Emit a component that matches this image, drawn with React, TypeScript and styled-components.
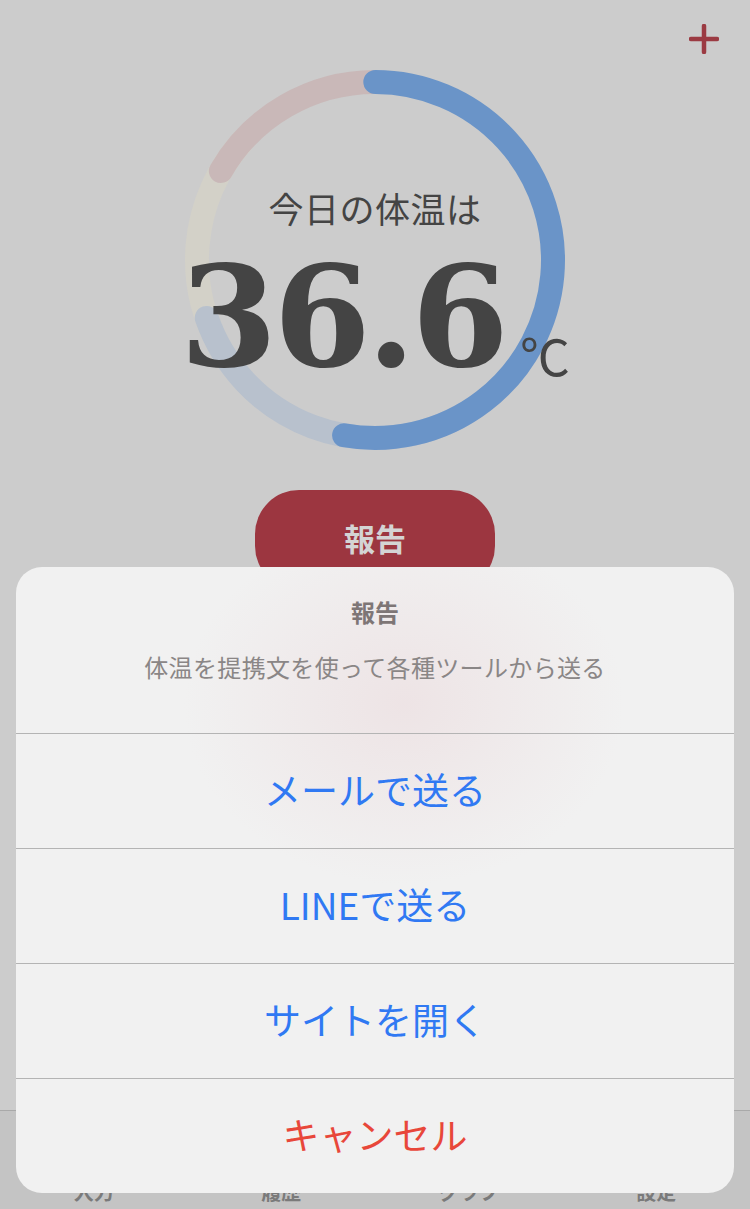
import styled, { createGlobalStyle } from "styled-components";

const GlobalStyle = createGlobalStyle`
  html, body {
    margin: 0;
    padding: 0;
    background: #cccccc;
  }
  body {
    font-family: "Noto Sans CJK JP", "Noto Sans", sans-serif;
  }
`;

const CX = 200;
const CY = 200;
const R = 178;

function point(angle: number) {
  const rad = (angle * Math.PI) / 180;
  return [CX + R * Math.sin(rad), CY - R * Math.cos(rad)];
}

function arc(from: number, to: number) {
  const [x1, y1] = point(from);
  const [x2, y2] = point(to);
  const large = to - from > 180 ? 1 : 0;
  return `M ${x1} ${y1} A ${R} ${R} 0 ${large} 1 ${x2} ${y2}`;
}

const segments = [
  { from: 238, to: 312, color: "#d3d1c8" },
  { from: 150, to: 251, color: "#b8c1cd" },
  { from: 300, to: 359.9, color: "#c9b8b8" },
  { from: 0.1, to: 190, color: "#6a94c8" },
];

const actions = [
  { label: "メールで送る", danger: false },
  { label: "LINEで送る", danger: false },
  { label: "サイトを開く", danger: false },
  { label: "キャンセル", danger: true },
];

const tabs = ["入力", "履歴", "グラフ", "設定"];

export default function App() {
  return (
    <>
      <GlobalStyle />
      <Screen>
        <Header>
          <PlusButton aria-label="追加">
            <svg width="30" height="30" viewBox="0 0 30 30">
              <path
                d="M15 2 V28 M2 15 H28"
                stroke="#9b3a42"
                strokeWidth="4.5"
                strokeLinecap="round"
              />
            </svg>
          </PlusButton>
        </Header>
        <Gauge>
          <svg width="400" height="400" viewBox="0 0 400 400">
            {segments.map((s, i) => (
              <path
                key={i}
                d={arc(s.from, s.to)}
                fill="none"
                stroke={s.color}
                strokeWidth="24"
                strokeLinecap="round"
              />
            ))}
          </svg>
          <GaugeText>
            <Caption>今日の体温は</Caption>
            <Reading>
              <Value>36.6</Value>
              <Unit>℃</Unit>
            </Reading>
          </GaugeText>
        </Gauge>
        <ReportButton>報告</ReportButton>
        <Spacer />
        <TabBar>
          {tabs.map((t) => (
            <Tab key={t}>{t}</Tab>
          ))}
        </TabBar>

        <Sheet>
          <SheetHeader>
            <SheetTitle>報告</SheetTitle>
            <SheetMessage>体温を提携文を使って各種ツールから送る</SheetMessage>
          </SheetHeader>
          {actions.map((a) => (
            <SheetAction key={a.label} $danger={a.danger}>
              {a.label}
            </SheetAction>
          ))}
        </Sheet>
      </Screen>
    </>
  );
}

const Screen = styled.div`
  position: relative;
  width: 750px;
  height: 1209px;
  display: flex;
  flex-direction: column;
  align-items: center;
  background: #cccccc;
  overflow: hidden;
`;

const Header = styled.div`
  align-self: stretch;
  height: 60px;
  display: flex;
  justify-content: flex-end;
  align-items: flex-start;
  padding: 24px 31px 0 0;
  box-sizing: border-box;
`;

const PlusButton = styled.button`
  border: none;
  background: none;
  padding: 0;
  width: 30px;
  height: 30px;
  display: flex;
`;

const Gauge = styled.div`
  display: grid;
  width: 400px;
  height: 400px;
  & > * {
    grid-area: 1 / 1;
  }
`;

const GaugeText = styled.div`
  display: flex;
  flex-direction: column;
  align-items: center;
  padding-top: 126px;
  color: #444444;
`;

const Caption = styled.div`
  font-size: 35px;
  line-height: 44px;
  letter-spacing: 0.5px;
`;

const Reading = styled.div`
  display: flex;
  align-items: baseline;
  margin-top: 32px;
`;

const Value = styled.span`
  font-family: "DejaVu Serif", serif;
  font-weight: bold;
  font-size: 140px;
  line-height: 110px;
  letter-spacing: -4px;
`;

const Unit = styled.span`
  font-size: 50px;
  line-height: 50px;
  margin-left: 15px;
  transform: translateY(10px);
  font-family: "Noto Sans CJK JP", sans-serif;
`;

const ReportButton = styled.button`
  margin-top: 30px;
  width: 240px;
  height: 100px;
  border: none;
  border-radius: 44px;
  background: #9c3640;
  color: #d4d4d4;
  font-family: "Noto Sans CJK JP", sans-serif;
  font-weight: bold;
  font-size: 31px;
  padding-bottom: 6px;
`;

const Spacer = styled.div`
  flex: 1;
`;

const TabBar = styled.nav`
  align-self: stretch;
  height: 99px;
  border-top: 1px solid #a9a9a9;
  background: #c4c4c4;
  display: grid;
  grid-template-columns: repeat(4, 1fr);
  align-items: end;
  padding-bottom: 4px;
  box-sizing: border-box;
`;

const Tab = styled.div`
  text-align: center;
  font-size: 20px;
  font-weight: bold;
  color: #7a7a7a;
  line-height: 26px;
`;

const Sheet = styled.div`
  position: absolute;
  left: 16px;
  right: 16px;
  top: 567px;
  bottom: 16px;
  border-radius: 26px;
  overflow: hidden;
  background:
    radial-gradient(ellipse 220px 180px at 54% 22%, rgba(236, 222, 224, 0.7), rgba(240, 240, 240, 0) 100%),
    #f1f1f1;
  display: flex;
  flex-direction: column;
`;

const SheetHeader = styled.div`
  height: 166px;
  display: flex;
  flex-direction: column;
  align-items: center;
  padding-top: 28px;
  box-sizing: border-box;
`;

const SheetTitle = styled.div`
  font-size: 24px;
  font-weight: bold;
  color: #7e7676;
  line-height: 34px;
`;

const SheetMessage = styled.div`
  margin-top: 21px;
  font-size: 24px;
  letter-spacing: 0.35px;
  color: #8a8686;
  line-height: 34px;
`;

const SheetAction = styled.div<{ $danger: boolean }>`
  height: 115px;
  border-top: 1px solid #b4b4b4;
  box-sizing: border-box;
  display: flex;
  align-items: center;
  justify-content: center;
  padding-bottom: 4px;
  font-size: 37px;
  color: ${(p) => (p.$danger ? "#e8473a" : "#3079f3")};
`;
